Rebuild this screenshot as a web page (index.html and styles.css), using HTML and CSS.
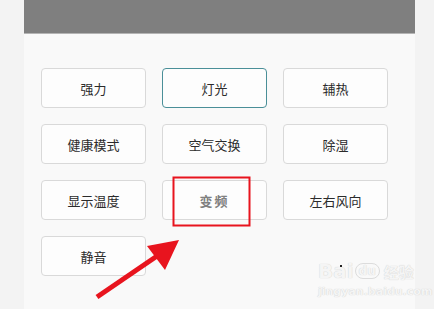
FILE: index.html
```html
<!DOCTYPE html>
<html lang="zh-CN">
<head>
    <meta charset="UTF-8">
    <meta name="viewport" content="width=device-width, initial-scale=1.0">
    <title>空调模式</title>
    <link rel="stylesheet" href="styles.css">
</head>
<body>
<div class="panel">
    <div class="topbar"></div>
    <div class="grid">
        <div class="btn">强力</div>
        <div class="btn active">灯光</div>
        <div class="btn">辅热</div>
        <div class="btn">健康模式</div>
        <div class="btn">空气交换</div>
        <div class="btn">除湿</div>
        <div class="btn">显示温度</div>
        <div class="btn disabled">变频</div>
        <div class="btn">左右风向</div>
        <div class="btn">静音</div>
    </div>
</div>

<!-- watermark -->
<div class="watermark">
    <div class="wm-line"><span class="wm-bai">Bai</span><span class="wm-paw">du</span><span class="wm-jy">经验</span></div>
    <div class="wm-url">jingyan.baidu.com</div>
</div>

<!-- annotation: red box + arrow -->
<svg class="annot" width="434" height="309" viewBox="0 0 434 309">
    <rect x="173.5" y="177.5" width="76" height="48" fill="none" stroke="#e8141e" stroke-width="2"/>
    <line x1="97" y1="297" x2="160" y2="254" stroke="#e8141e" stroke-width="5"/>
    <polygon points="179,240 147,246 165,270" fill="#e8141e"/>
    <rect x="340" y="265" width="2" height="2" fill="#222"/>
</svg>
</body>
</html>
```

FILE: styles.css
```css
body {
    margin: 0;
    background-color: #f3f3f3;
    font-family: "Noto Sans CJK SC", "Noto Sans", sans-serif;
    width: 434px;
    height: 309px;
    overflow: hidden;
}
.panel {
    margin: 0 19px 0 24px;
    height: 309px;
    background-color: #f9f9f9;
}
.topbar {
    height: 33px;
    background-color: #7f7f7f;
    border-bottom: 1px solid #b4b4b4;
}
.grid {
    display: grid;
    grid-template-columns: repeat(3, 105px);
    grid-auto-rows: 40px;
    column-gap: 16px;
    row-gap: 16px;
    padding: 34px 0 0 17px;
}
.btn {
    box-sizing: border-box;
    border: 1px solid #d9d9d9;
    border-radius: 4px;
    background-color: #fdfdfd;
    display: flex;
    align-items: center;
    justify-content: center;
    font-size: 13px;
    color: #2b2b2b;
}
.btn.active {
    border-color: #4a8f98;
}
.btn.disabled {
    color: #808080;
    font-weight: bold;
    letter-spacing: 2px;
}
.watermark {
    position: absolute;
    left: 318px;
    top: 257px;
    color: #f5f5f5;
    text-shadow: 0 0 1px #c4c4c4;
    font-family: "DejaVu Sans", sans-serif;
}
.wm-line {
    display: flex;
    align-items: center;
    font-size: 20px;
    font-weight: bold;
    height: 28px;
}
.wm-paw {
    font-size: 12px;
    border: 1px solid #dcdcdc;
    border-radius: 10px;
    padding: 0 3px;
    margin: 0 4px 0 1px;
}
.wm-jy {
    font-family: "Noto Sans CJK SC", sans-serif;
    font-size: 15px;
}
.wm-url {
    font-size: 11px;
    font-weight: bold;
}
.annot {
    position: absolute;
    left: 0;
    top: 0;
}
```
